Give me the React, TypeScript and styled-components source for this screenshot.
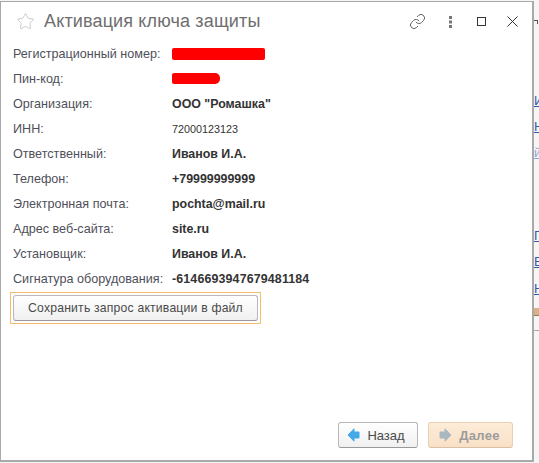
import React from 'react';
import styled, { createGlobalStyle } from 'styled-components';
import { Link, Star } from 'lucide-react';

const GlobalStyle = createGlobalStyle`
  html, body {
    margin: 0;
    padding: 0;
    width: 539px;
    height: 463px;
    overflow: hidden;
    background: #f5f5f5;
  }
`;

const Page = styled.div`
  position: relative;
  width: 539px;
  height: 463px;
  padding: 1px 0 0 0;
  box-sizing: border-box;
  font-family: 'Liberation Sans', Arial, sans-serif;
  color: #4b4b4b;
`;

const Win = styled.div`
  width: 534px;
  height: 461px;
  box-sizing: border-box;
  background: #fff;
  border: 1px solid #a9a9a9;
  border-right-width: 2px;
  border-bottom-width: 2px;
  display: flex;
  flex-direction: column;
  padding: 0 0 12px 12px;
`;

const Header = styled.div`
  display: flex;
  align-items: center;
  height: 39px;
  padding: 0 4px 0 3px;
`;

const Title = styled.div`
  font-size: 18px;
  color: #6e6e6e;
  margin-left: 9px;
  flex: 1;
  letter-spacing: 0.15px;
`;

const Tools = styled.div`
  display: flex;
  align-items: center;
  color: #555;
`;

const Tool = styled.div<{ $w?: number }>`
  width: ${p => p.$w || 31}px;
  display: flex;
  align-items: center;
  justify-content: center;
`;

const Rows = styled.div`
  display: flex;
  flex-direction: column;
`;

const Row = styled.div`
  display: flex;
  align-items: center;
  height: 25px;
`;

const Label = styled.div`
  width: 159px;
  font-size: 12.6px;
  color: #4f4f5a;
  white-space: nowrap;
`;

const Value = styled.div<{ $bold?: boolean; $wide?: boolean }>`
  font-size: ${p => (p.$bold ? 12.4 : 10.8)}px;
  font-weight: ${p => (p.$bold ? 700 : 400)};
  letter-spacing: ${p => (p.$wide ? 0.15 : 0)}px;
  color: #333;
  white-space: nowrap;
`;

const Redacted = styled.div<{ $w: number; $round?: boolean }>`
  width: ${p => p.$w}px;
  height: ${p => (p.$round ? 11 : 12)}px;
  background: #ff0000;
  border-radius: ${p => (p.$round ? '2px 5px 5px 2px' : '2px')};
`;

const Focus = styled.div`
  align-self: flex-start;
  border: 1px solid #f7bb6f;
  padding: 2px;
  margin-top: 1px;
  margin-left: -3px;
`;

const Button = styled.div<{ $disabled?: boolean }>`
  display: flex;
  align-items: center;
  justify-content: center;
  box-sizing: border-box;
  height: 26px;
  font-size: 12.2px;
  border-radius: 3px;
  border: 1px solid ${p => (p.$disabled ? '#e9d0b5' : '#b8b8b8')};
  border-bottom-color: ${p => (p.$disabled ? '#d9bfa4' : '#999')};
  color: ${p => (p.$disabled ? '#9c9c9c' : '#4a4a4a')};
  font-weight: ${p => (p.$disabled ? 700 : 400)};
  background: ${p =>
    p.$disabled
      ? 'linear-gradient(#fdecd8, #f9e0c7)'
      : 'linear-gradient(#ffffff, #f0f0f0)'};
`;

const SaveButton = styled(Button)`
  width: 245px;
  letter-spacing: 0.2px;
`;

const Footer = styled.div`
  margin-top: auto;
  display: flex;
  justify-content: flex-end;
  gap: 10px;
  padding-right: 19px;
`;

const NavButton = styled(Button)`
  width: 80px;
  gap: 7px;
  font-size: 13px;
  padding-right: 4px;
`;

const NextButton = styled(Button)`
  width: 85px;
  gap: 7px;
  font-size: 13px;
  letter-spacing: 0.3px;
  padding-right: 2px;
`;

const Behind = styled.div<{ $top: number; $color?: string }>`
  position: absolute;
  left: 534px;
  top: ${p => p.$top}px;
  width: 5px;
  overflow: hidden;
  font-size: 13px;
  line-height: 14px;
  color: ${p => p.$color || '#2a5db0'};
  text-decoration: underline;
  white-space: nowrap;
`;

const BehindBar = styled.div`
  position: absolute;
  left: 534px;
  top: 308px;
  width: 5px;
  height: 7px;
  background: #d9b184;
  border-bottom: 1px solid #8f7a60;
`;

const BehindCorner = styled.div`
  position: absolute;
  left: 534px;
  top: 20px;
  width: 3px;
  height: 3px;
  border-top: 1px solid #555;
  border-right: 1px solid #555;
`;

const BehindRule = styled.div`
  position: absolute;
  left: 534px;
  top: 330px;
  width: 5px;
  height: 1px;
  background: #a8a8a8;
`;

const Arrow = ({ color, flip }: { color: string; flip?: boolean }) => (
  <svg width="13" height="14" viewBox="0 0 13 14" style={flip ? { transform: 'scaleX(-1)' } : undefined}>
    <path d="M7 0.8 L1 7 L7 13.2 V10 H12 V4 H7 Z" fill={color} stroke={color} strokeLinejoin="round" />
  </svg>
);

const Dots = () => (
  <svg width="3" height="12" viewBox="0 0 3 12" fill="#777">
    <rect y="0" width="3" height="3" />
    <rect y="4.5" width="3" height="3" />
    <rect y="9" width="3" height="3" />
  </svg>
);

const Maximize = () => (
  <svg width="9" height="9" viewBox="0 0 9 9" fill="none" stroke="#333">
    <rect x="0.5" y="0.5" width="8" height="8" />
  </svg>
);

const Close = () => (
  <svg width="11" height="11" viewBox="0 0 11 11" fill="none" stroke="#333">
    <path d="M0.5 0.5 L10.5 10.5 M10.5 0.5 L0.5 10.5" />
  </svg>
);

const rows: { label: string; value?: string; bold?: boolean; wide?: boolean; redact?: number; round?: boolean }[] = [
  { label: 'Регистрационный номер:', redact: 93 },
  { label: 'Пин-код:', redact: 48, round: true },
  { label: 'Организация:', value: 'ООО "Ромашка"', bold: true },
  { label: 'ИНН:', value: '72000123123' },
  { label: 'Ответственный:', value: 'Иванов И.А.', bold: true },
  { label: 'Телефон:', value: '+79999999999', bold: true },
  { label: 'Электронная почта:', value: 'pochta@mail.ru', bold: true },
  { label: 'Адрес веб-сайта:', value: 'site.ru', bold: true },
  { label: 'Установщик:', value: 'Иванов И.А.', bold: true },
  { label: 'Сигнатура оборудования:', value: '-6146693947679481184', bold: true, wide: true },
];

export default function App() {
  return (
    <Page>
      <GlobalStyle />
      <BehindCorner />
      <Behind $top={94}>И</Behind>
      <Behind $top={120}>Н</Behind>
      <Behind $top={146} $color="#8ea6d6">й</Behind>
      <Behind $top={229}>П</Behind>
      <Behind $top={255}>В</Behind>
      <Behind $top={282}>Н</Behind>
      <BehindBar />
      <BehindRule />
      <Win>
        <Header>
          <Star size={19} color="#c4c8cc" strokeWidth={1.2} />
          <Title>Активация ключа защиты</Title>
          <Tools>
            <Tool $w={35}><Link size={17} strokeWidth={1.3} /></Tool>
            <Tool><Dots /></Tool>
            <Tool><Maximize /></Tool>
            <Tool><Close /></Tool>
          </Tools>
        </Header>
        <Rows>
          {rows.map(r => (
            <Row key={r.label}>
              <Label>{r.label}</Label>
              {r.redact ? (
                <Redacted $w={r.redact} $round={r.round} />
              ) : (
                <Value $bold={r.bold} $wide={r.wide}>{r.value}</Value>
              )}
            </Row>
          ))}
        </Rows>
        <Focus>
          <SaveButton>Сохранить запрос активации в файл</SaveButton>
        </Focus>
        <Footer>
          <NavButton>
            <Arrow color="#45a9e8" />
            Назад
          </NavButton>
          <NextButton $disabled>
            <Arrow color="#a9b8bf" flip />
            Далее
          </NextButton>
        </Footer>
      </Win>
    </Page>
  );
}
